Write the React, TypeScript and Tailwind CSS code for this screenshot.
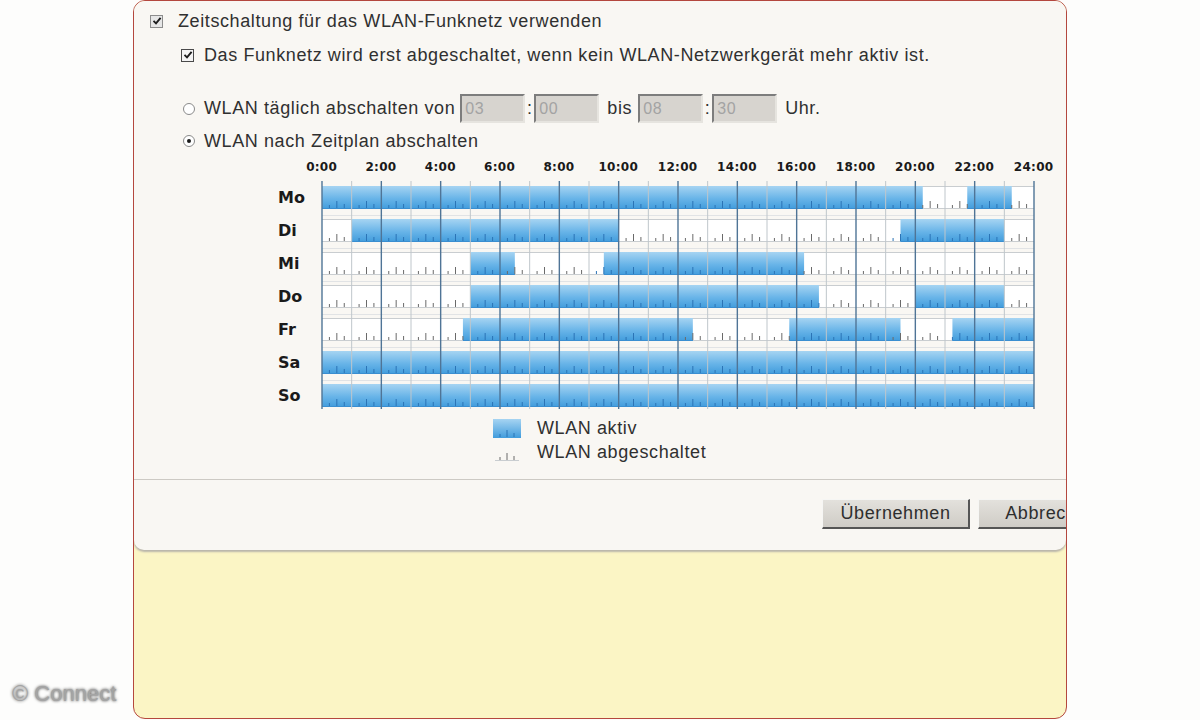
import React from "react";

const H = 712 / 24;
const ROW = 33;
const BAR = 23;
const TOP = 5;

const days = ["Mo", "Di", "Mi", "Do", "Fr", "Sa", "So"];

// active (WLAN an) ranges per day, in hours
const schedule: [number, number][][] = [
  [[0, 20.25], [21.75, 23.25]],
  [[1, 10], [19.5, 23]],
  [[5, 6.5], [9.5, 16.25]],
  [[5, 16.75], [20, 23]],
  [[4.75, 12.5], [15.75, 19.5], [21.25, 24]],
  [[0, 24]],
  [[0, 24]],
];

const hours = Array.from({ length: 13 }, (_, i) => `${i * 2}:00`);

function isActive(day: number, t: number) {
  return schedule[day].some(([a, b]) => t >= a && t < b);
}

function CheckBox({ focus }: { focus?: boolean }) {
  return (
    <div
      className={`flex h-[13px] w-[13px] shrink-0 items-center justify-center border ${
        focus ? "border-[#4a4a4a] bg-[#f4f4f4]" : "border-[#8c8c8c] bg-[#e6e6e6]"
      }`}
    >
      <svg width="10" height="10" viewBox="0 0 10 10">
        <path d="M1.5 4.8 L4 7.3 L8.6 1.8" fill="none" stroke="#1e1e1e" strokeWidth="1.9" />
      </svg>
    </div>
  );
}

function Radio({ checked }: { checked?: boolean }) {
  return (
    <div className="flex h-[12px] w-[12px] shrink-0 items-center justify-center rounded-full border border-[#8a8a8a] bg-white">
      {checked && <div className="h-[4px] w-[4px] rounded-full bg-[#1a1a1a]" />}
    </div>
  );
}

function TimeBox({ value }: { value: string }) {
  return (
    <div className="flex h-[29px] w-[65px] items-center border-2 border-t-[#7d7d7d] border-l-[#7d7d7d] border-r-[#e6e4df] border-b-[#e6e4df] bg-[#d7d4cf] pl-[3px] text-[16px] text-[#a3a3a3]">
      {value}
    </div>
  );
}

function Ticks({ x, y, on }: { x: number; y: number; on: boolean }) {
  const c = on ? "#2b74b6" : "#6a6a6a";
  return (
    <g stroke={c} strokeWidth="1">
      <line x1={x + H * 0.25} x2={x + H * 0.25} y1={y} y2={y - 3} />
      <line x1={x + H * 0.5} x2={x + H * 0.5} y1={y} y2={y - 7} />
      <line x1={x + H * 0.75} x2={x + H * 0.75} y1={y} y2={y - 4} />
    </g>
  );
}

function ScheduleChart() {
  const bottom = TOP + 6 * ROW + BAR;
  return (
    <svg width={716} height={bottom + 3} className="block">
      <defs>
        <linearGradient id="wlan" x1="0" y1="0" x2="0" y2="1">
          <stop offset="0%" stopColor="#a6d4f2" />
          <stop offset="55%" stopColor="#68b4e8" />
          <stop offset="100%" stopColor="#419cdc" />
        </linearGradient>
      </defs>
      {days.map((d, di) => {
        const y0 = TOP + di * ROW;
        return (
          <g key={d}>
            <rect x={1} y={y0} width={712} height={BAR} fill="#ffffff" />
            <line x1={1} x2={713} y1={y0 + 0.5} y2={y0 + 0.5} stroke="#c9cdd0" />
            <line x1={1} x2={713} y1={y0 + BAR - 0.5} y2={y0 + BAR - 0.5} stroke="#c9cdd0" />
            <line x1={1} x2={713} y1={y0 + BAR + 6.5} y2={y0 + BAR + 6.5} stroke="#e1e3e5" />
            {schedule[di].map(([a, b]) => (
              <g key={a}>
                <rect x={1 + a * H} y={y0} width={(b - a) * H} height={BAR} fill="url(#wlan)" />
                <line
                  x1={1 + a * H}
                  x2={1 + b * H}
                  y1={y0 + BAR - 0.5}
                  y2={y0 + BAR - 0.5}
                  stroke="#3a8ed0"
                />
              </g>
            ))}
            {Array.from({ length: 24 }, (_, h) => (
              <Ticks key={h} x={1 + h * H} y={y0 + BAR - 1} on={isActive(di, h + 0.5)} />
            ))}
          </g>
        );
      })}
      {Array.from({ length: 25 }, (_, i) => {
        const x = 1 + i * H;
        const major = i % 2 === 0;
        return (
          <line
            key={i}
            x1={x}
            x2={x}
            y1={0}
            y2={bottom + 2}
            stroke={major ? "#4f7496" : "#bfc6cb"}
            strokeWidth={major ? 1.4 : 1}
          />
        );
      })}
    </svg>
  );
}

export default function App() {
  return (
    <div
      className="relative flex h-[720px] w-[1200px] overflow-hidden bg-[#fdfdfc] text-[#303030]"
      style={{ fontFamily: '"Liberation Sans", Arial, sans-serif' }}
    >
      <div className="w-[133px] shrink-0" />

      <div className="flex h-[719px] w-[934px] shrink-0 flex-col overflow-hidden rounded-[12px] border border-[#b4473e] bg-[#fbf5c5]">
        <div className="flex h-[549px] shrink-0 flex-col rounded-b-[10px] bg-[#f9f7f3] shadow-[0_2px_2px_#b9b5ab] text-[18px] tracking-[0.6px]">
          <div className="mt-[8px] flex h-[24px] items-center gap-[15px] pl-[16px]">
            <CheckBox />
            <span>Zeitschaltung für das WLAN-Funknetz verwenden</span>
          </div>

          <div className="mt-[10px] flex h-[24px] items-center gap-[10px] pl-[47px]">
            <CheckBox focus />
            <span>Das Funknetz wird erst abgeschaltet, wenn kein WLAN-Netzwerkgerät mehr aktiv ist.</span>
          </div>

          <div className="mt-[27px] flex h-[29px] items-center pl-[49px]">
            <Radio />
            <span className="ml-[9px] mr-[5px]">WLAN täglich abschalten von</span>
            <TimeBox value="03" />
            <span className="w-[9px] text-center">:</span>
            <TimeBox value="00" />
            <span className="ml-[8px] mr-[6px]">bis</span>
            <TimeBox value="08" />
            <span className="w-[9px] text-center">:</span>
            <TimeBox value="30" />
            <span className="ml-[8px]">Uhr.</span>
          </div>

          <div className="mt-[6px] flex h-[24px] items-center pl-[49px]">
            <Radio checked />
            <span className="ml-[9px]">WLAN nach Zeitplan abschalten</span>
          </div>

          <div
            className="mt-[6px] flex h-[16px] items-center pl-[158px] text-[12px] font-bold tracking-[0.3px] text-[#1a1a1a]"
            style={{ fontFamily: '"DejaVu Sans", Verdana, sans-serif' }}
          >
            {hours.map((h) => (
              <div key={h} className="w-[59.33px] shrink-0 text-center">
                {h}
              </div>
            ))}
          </div>

          <div className="mt-[6px] flex pl-[144px]">
            <div
              className="flex w-[43px] shrink-0 flex-col gap-[10px] pt-[5px] text-[16px] font-bold tracking-normal text-[#1a1a1a]"
              style={{ fontFamily: '"DejaVu Sans", Verdana, sans-serif' }}
            >
              {days.map((d) => (
                <div key={d} className="flex h-[23px] items-center">
                  {d}
                </div>
              ))}
            </div>
            <ScheduleChart />
          </div>

          <div className="mt-[6px] flex flex-col pl-[359px]">
            <div className="flex h-[24px] items-center gap-[16px]">
              <svg width="28" height="19" className="block">
                <defs>
                  <linearGradient id="wlanLegend" x1="0" y1="0" x2="0" y2="1">
                    <stop offset="0%" stopColor="#a6d4f2" />
                    <stop offset="100%" stopColor="#419cdc" />
                  </linearGradient>
                </defs>
                <rect x="0" y="0" width="28" height="19" fill="url(#wlanLegend)" />
                <g stroke="#2b74b6">
                  <line x1="7" x2="7" y1="18" y2="15" />
                  <line x1="14" x2="14" y1="18" y2="11" />
                  <line x1="21" x2="21" y1="18" y2="14" />
                </g>
              </svg>
              <span>WLAN aktiv</span>
            </div>
            <div className="flex h-[24px] items-center gap-[16px]">
              <svg width="28" height="19" className="block">
                <line x1="2" x2="26" y1="17.5" y2="17.5" stroke="#c9cdd0" />
                <g stroke="#6a6a6a">
                  <line x1="7" x2="7" y1="17" y2="14" />
                  <line x1="14" x2="14" y1="17" y2="10" />
                  <line x1="21" x2="21" y1="17" y2="13" />
                </g>
              </svg>
              <span>WLAN abgeschaltet</span>
            </div>
          </div>

          <div className="mt-[15px] border-t border-[#cdcac4]" />

          <div className="mt-[19px] flex h-[30px] gap-[8px] pl-[688px]">
            <button
              type="button"
              className="h-[30px] w-[148px] shrink-0 border border-t-[#f6f6f4] border-l-[#f6f6f4] border-r-2 border-b-2 border-r-[#555555] border-b-[#555555] bg-gradient-to-b from-[#e3e1dc] to-[#cfccc6] text-[18px] text-[#2e2e2e]"
            >
              Übernehmen
            </button>
            <button
              type="button"
              className="h-[30px] w-[148px] shrink-0 border border-t-[#f6f6f4] border-l-[#f6f6f4] border-r-2 border-b-2 border-r-[#555555] border-b-[#555555] bg-gradient-to-b from-[#e3e1dc] to-[#cfccc6] text-[18px] text-[#2e2e2e]"
            >
              Abbrechen
            </button>
          </div>
        </div>
      </div>

      <div className="absolute bottom-[10px] left-[12px] text-[22px] text-[#a4a4a4] [text-shadow:0_0_3px_#3c3c3c]">
        © Connect
      </div>
    </div>
  );
}
